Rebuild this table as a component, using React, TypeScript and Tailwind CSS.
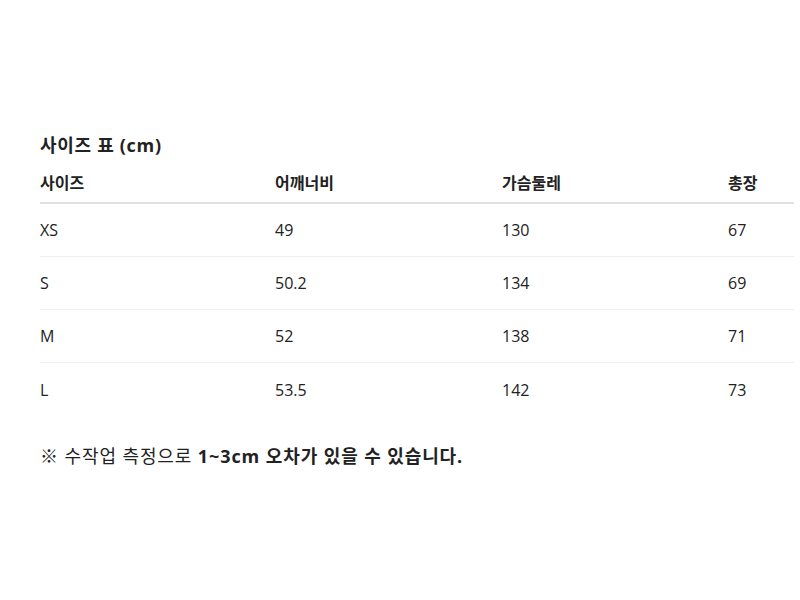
const rows = [
  { size: 'XS', shoulder: '49', chest: '130', length: '67' },
  { size: 'S', shoulder: '50.2', chest: '134', length: '69' },
  { size: 'M', shoulder: '52', chest: '138', length: '71' },
  { size: 'L', shoulder: '53.5', chest: '142', length: '73' },
];

const cols = 'grid grid-cols-[235px_227px_226px_1fr]';

export default function App() {
  return (
    <div
      className="w-[800px] h-[600px] bg-white text-[#222] pl-10 pr-[6px] pt-[132px]"
      style={{ fontFamily: '"Open Sans", "Noto Sans CJK KR", sans-serif' }}
    >
      <h2 className="text-[18px] leading-[26px] font-bold tracking-[0.7px]">사이즈 표 (cm)</h2>

      <div className="mt-[14px]">
        <div className={`${cols} text-[16px] font-bold leading-[22px] pb-[8px] border-b-2 border-[#e0e0e0]`}>
          <div>사이즈</div>
          <div>어깨너비</div>
          <div>가슴둘레</div>
          <div>총장</div>
        </div>
        {rows.map((r, i) => (
          <div
            key={r.size}
            className={`${cols} h-[53px] items-center text-[16px] ${i < rows.length - 1 ? 'border-b border-[#f0f0f0]' : ''}`}
          >
            <div>{r.size}</div>
            <div>{r.shoulder}</div>
            <div>{r.chest}</div>
            <div>{r.length}</div>
          </div>
        ))}
      </div>

      <p className="mt-[27px] text-[18px] leading-[26px] tracking-[0.9px]">
        ※ 수작업 측정으로 <span className="font-bold">1~3cm 오차가 있을 수 있습니다.</span>
      </p>
    </div>
  );
}
